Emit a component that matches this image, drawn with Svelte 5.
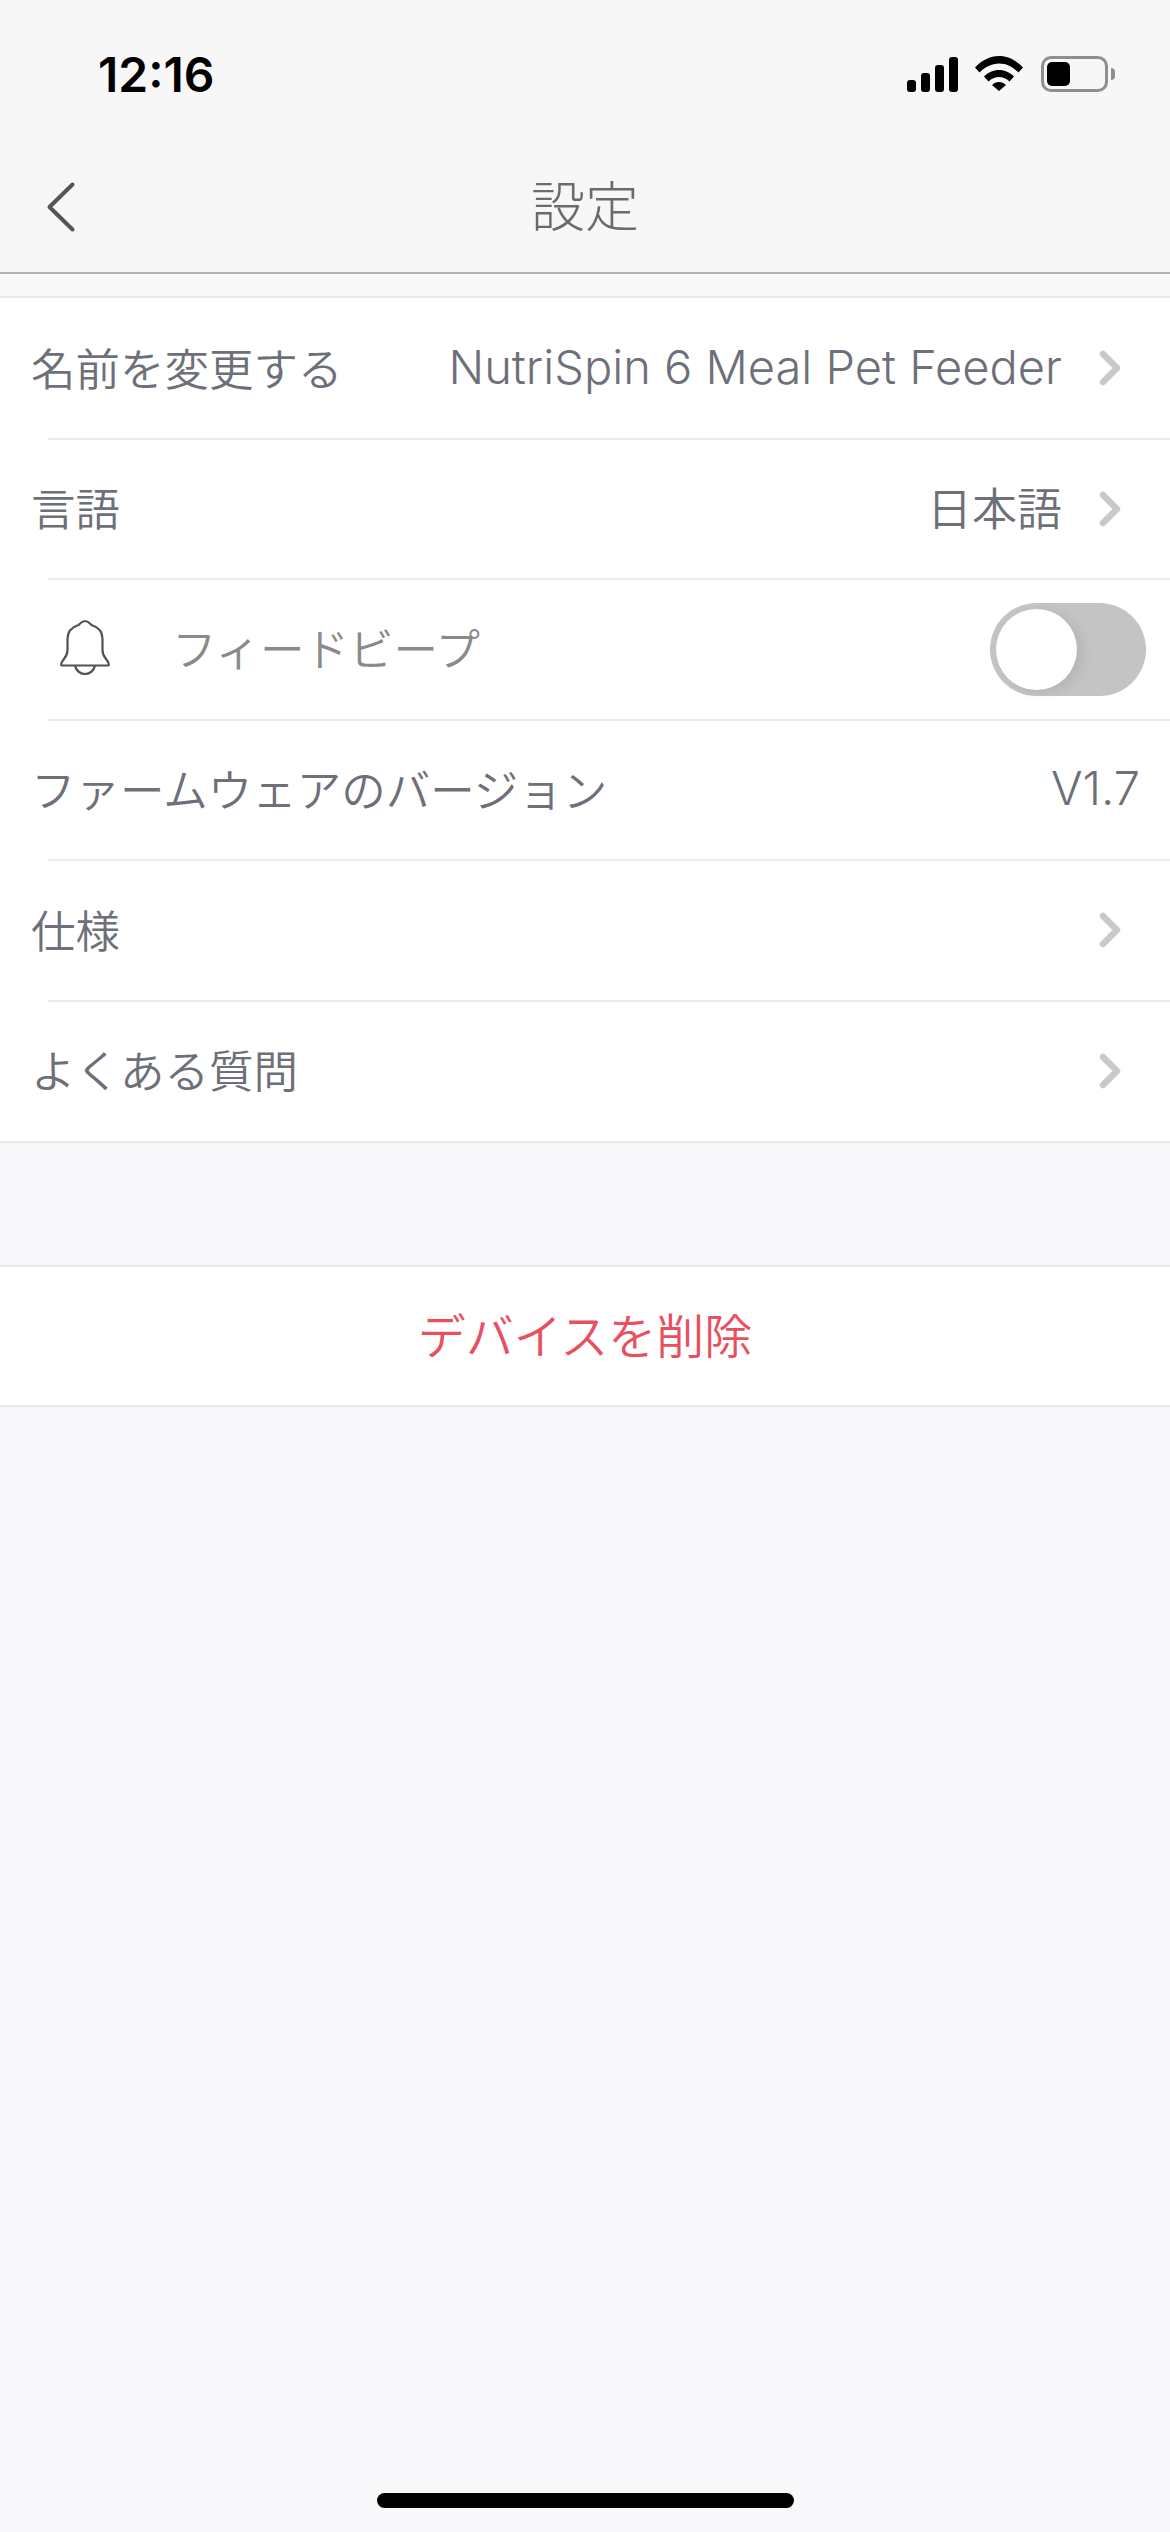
<script>
  const rows = [
    { label: '名前を変更する', value: 'NutriSpin 6 Meal Pet Feeder', latin: true, arrow: true },
    { label: '言語', value: '日本語', arrow: true },
    { label: 'フィードビープ', bell: true },
    { label: 'ファームウェアのバージョン', value: 'V1.7', latin: true },
    { label: '仕様', arrow: true },
    { label: 'よくある質問', arrow: true }
  ]
</script>

<main>
  <header>
    <div class="status">
      <span class="time">12:16</span>
      <div class="indicators">
        <svg class="signal" width="51" height="35" viewBox="0 0 51 35" fill="#000">
          <rect x="0" y="23" width="9" height="12" rx="3" />
          <rect x="14" y="16" width="9" height="19" rx="3" />
          <rect x="28" y="8" width="9" height="27" rx="3" />
          <rect x="42" y="0" width="9" height="35" rx="3" />
        </svg>
        <svg class="wifi" width="48" height="35" viewBox="0 0 48 35" fill="#000">
          <path d="M0 11.5C6.5 4.5 15 0 24 0s17.500 4.500 24 11.500l-4.500 5C38 11 31.500 7.500 24 7.500S10 11 4.500 16.500z" />
          <path d="M9 20.500C13 16.500 18.500 14 24 14s11 2.500 15 6.500l-4.500 5C31.500 22.500 28 21 24 21s-7.500 1.500-10.500 4.500z" />
          <path d="M17 29c2-1.800 4.500-3 7-3s5 1.200 7 3l-7 6z" />
        </svg>
        <div class="battery">
          <div class="cell"><div class="charge"></div></div>
          <div class="nub"></div>
        </div>
      </div>
    </div>
    <div class="nav">
      <svg class="back" width="30" height="52" viewBox="0 0 30 52" fill="none" stroke="#555" stroke-width="4" stroke-linecap="round" stroke-linejoin="round">
        <path d="M26.500 3.500 3.500 26l23 22.500" />
      </svg>
      <h1>設定</h1>
    </div>
  </header>

  <section class="list">
    {#each rows as row}
      <div class="row" class:bell-row={row.bell}>
        {#if row.bell}
          <svg class="bell" width="50" height="56" viewBox="0 0 50 56" fill="none" stroke="#55504f" stroke-width="2.200" stroke-linejoin="round">
            <path d="M25 2c3.500 0 5 2.500 6.500 4 6.500 2 11 6 11 14v11c0 4.500 1 6 3.500 9 2 2.500 3.500 5 2.500 6.500H1.500c-1-1.500.5-4 2.500-6.500 2.500-3 3.500-4.500 3.500-9V20c0-8 4.500-12 11-14C20 4.500 21.500 2 25 2z" />
            <path d="M15 46.500c1 5 5 8.500 10 8.500s9-3.500 10-8.500" />
          </svg>
        {/if}
        <span class="label">{row.label}</span>
        {#if row.value}<span class="value" class:plain={!row.arrow} class:latin={row.latin}>{row.value}</span>{/if}
        {#if row.arrow}
          <svg class="chevron" width="22" height="36" viewBox="0 0 22 36" fill="none" stroke="#c9c9c9" stroke-width="6.500" stroke-linecap="round" stroke-linejoin="round">
            <path d="M4 4l14 14L4 32" />
          </svg>
        {/if}
        {#if row.bell}
          <div class="toggle"><div class="knob"></div></div>
        {/if}
      </div>
    {/each}
  </section>

  <button class="delete">デバイスを削除</button>

  <div class="home"></div>
</main>

<style>
  :global(body) {
    margin: 0;
    background: #f8f8fa;
  }
  main {
    height: 2532px;
    display: flex;
    flex-direction: column;
    position: relative;
    overflow: hidden;
    background: #f8f8fa;
    font-family: Inter, "Noto Sans CJK JP", sans-serif;
  }
  header {
    background: #f7f7f7;
    border-bottom: 2px solid #b4b4b4;
    height: 272px;
    flex: none;
  }
  .status {
    height: 148px;
    display: flex;
    justify-content: space-between;
    align-items: flex-start;
    padding: 56px 55px 0 98px;
    box-sizing: border-box;
  }
  .time {
    font-family: Inter, "Liberation Sans", sans-serif;
    font-weight: 600;
    font-size: 48px;
    line-height: 36px;
    margin-top: 1px;
    color: #000;
  }
  .indicators {
    display: flex;
    align-items: flex-start;
    gap: 17px;
  }
  .signal {
    margin-top: 1px;
  }
  .battery {
    display: flex;
    align-items: center;
    margin-left: 1px;
  }
  .cell {
    width: 67px;
    height: 36px;
    box-sizing: border-box;
    border: 3px solid #8e8e8e;
    border-radius: 10px;
    padding: 3px;
  }
  .charge {
    width: 23px;
    height: 24px;
    background: #000;
    border-radius: 5px;
  }
  .nub {
    width: 4px;
    height: 12px;
    margin-left: 3px;
    background: #8e8e8e;
    border-radius: 0 6px 6px 0;
  }
  .nav {
    height: 124px;
    display: flex;
    align-items: center;
    justify-content: center;
    position: relative;
  }
  .back {
    position: absolute;
    left: 46px;
    top: 33px;
  }
  h1 {
    margin: 0 0 14px;
    font-size: 54px;
    font-weight: 300;
    color: #6b6b6b;
  }
  .list {
    margin-top: 22px;
    background: #fff;
    border-top: 2px solid #e8e8ea;
    border-bottom: 2px solid #e8e8ea;
    flex: none;
  }
  .row {
    height: 140.5px;
    box-sizing: border-box;
    display: flex;
    align-items: center;
    padding: 0 30px 4px 31px;
    position: relative;
    font-size: 44.5px;
    font-weight: 350;
    color: #6d7078;
  }
  /* hairline starts inset from the left edge */
  .row + .row::before {
    content: "";
    position: absolute;
    left: 48px;
    right: 0;
    top: -1px;
    height: 2px;
    background: #ebebed;
  }
  .label {
    flex: 1;
  }
  .value {
    font-size: 45px;
    margin-right: 37px;
  }
  .value.latin {
    font-size: 47px;
  }
  .value.plain {
    margin-right: 0;
  }
  .chevron {
    margin: 4px 19px 0 0;
  }
  .bell-row {
    padding: 0 24px 0 60px;
  }
  .bell {
    margin-bottom: 4px;
  }
  .bell-row .label {
    margin: 0 0 6px 62px;
    color: #8a8a8a;
  }
  .toggle {
    width: 156px;
    height: 93px;
    border-radius: 47px;
    background: #c4c4c4;
    padding: 6px;
    box-sizing: border-box;
  }
  .knob {
    width: 81px;
    height: 81px;
    border-radius: 50%;
    background: #fff;
    box-shadow: 6px 3px 12px rgba(0, 0, 0, 0.08);
  }
  .delete {
    display: block;
    width: 100%;
    height: 142px;
    flex: none;
    margin-top: 122px;
    background: #fff;
    border: 0;
    border-top: 2px solid #e8e8ea;
    border-bottom: 2px solid #e8e8ea;
    font-family: inherit;
    font-size: 48px;
    font-weight: 350;
    color: #e9505f;
    padding: 0 0 6px;
  }
  .home {
    position: absolute;
    left: 377px;
    top: 2493px;
    width: 417px;
    height: 15px;
    border-radius: 8px;
    background: #000;
  }
</style>
